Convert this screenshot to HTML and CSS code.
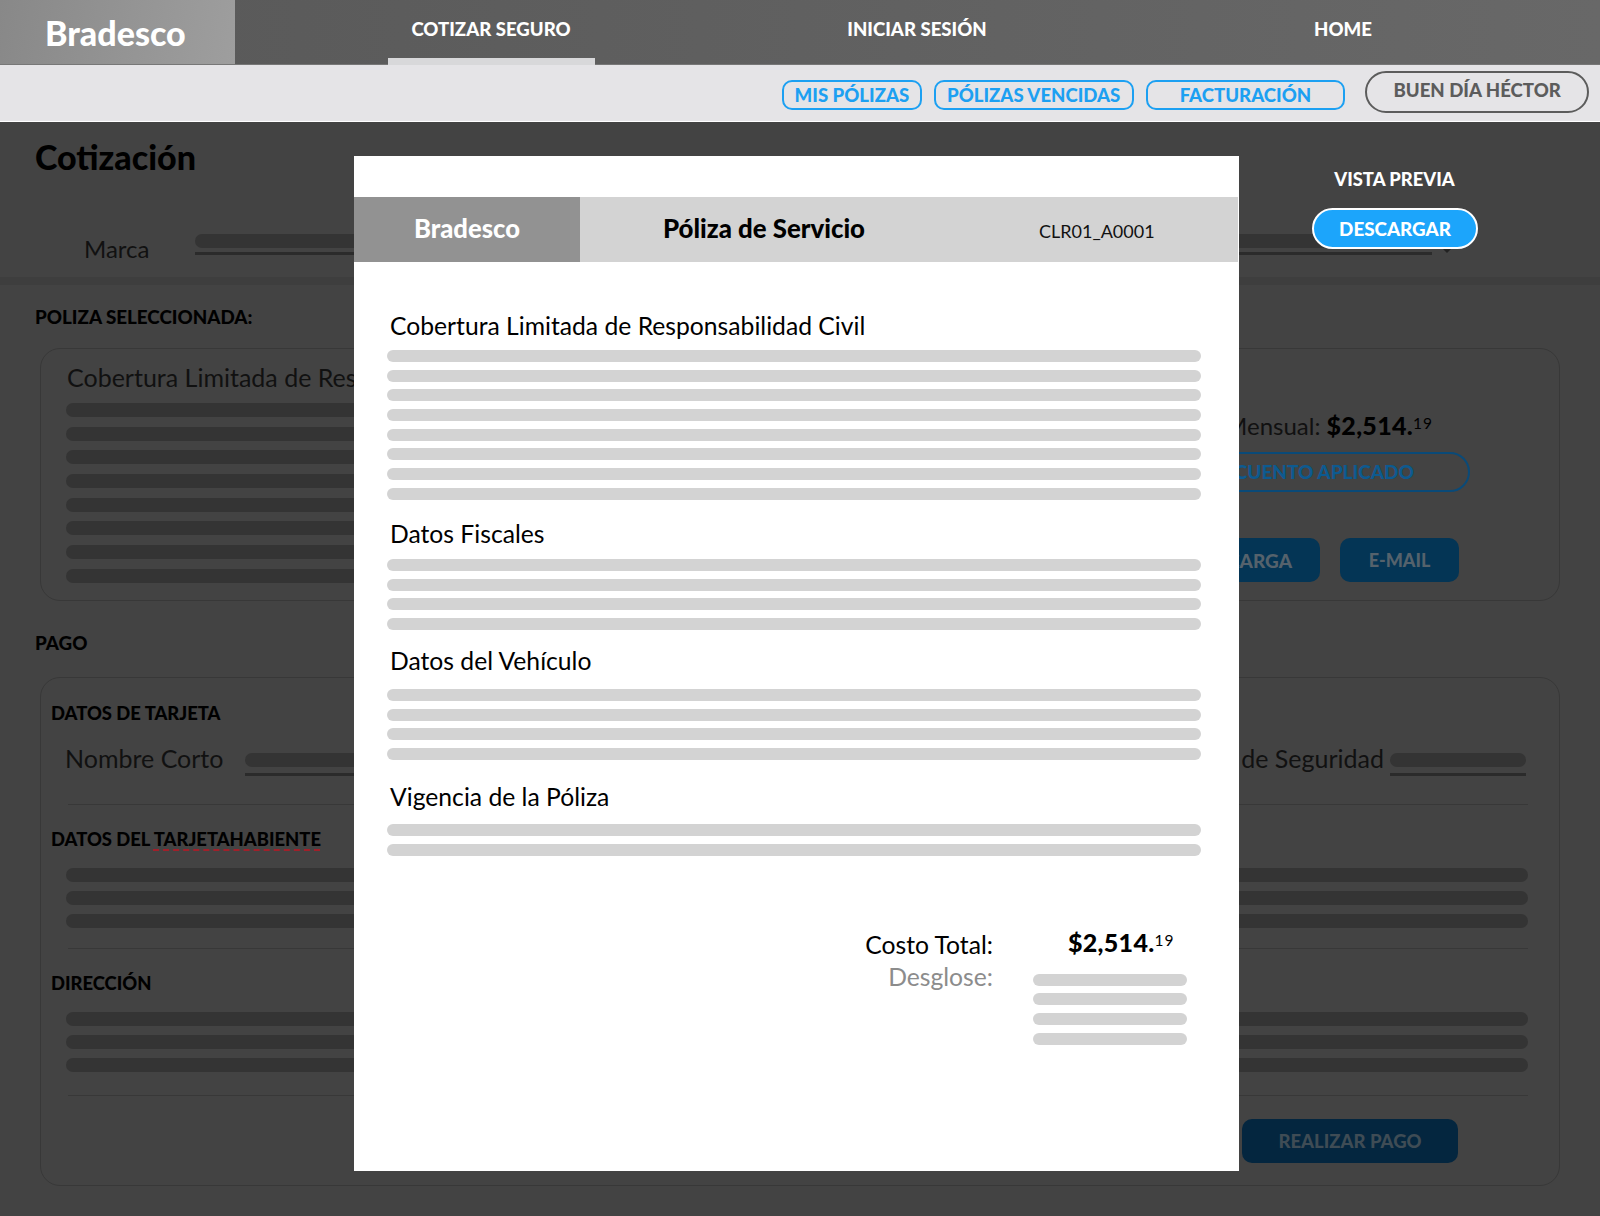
FILE: index.html
```html
<!DOCTYPE html>
<html lang="es">
<head>
<meta charset="utf-8">
<title>Bradesco - Cotización</title>
<link rel="stylesheet" href="styles.css">
</head>
<body>
<header class="topbar">
  <div class="logo">Bradesco</div>
  <nav class="nav">
    <a class="nav-item active">COTIZAR SEGURO</a>
    <a class="nav-item">INICIAR SESIÓN</a>
    <a class="nav-item">HOME</a>
  </nav>
</header>
<div class="subbar">
  <a class="pill pill-mis">MIS PÓLIZAS</a>
  <a class="pill pill-wide">PÓLIZAS VENCIDAS</a>
  <a class="pill pill-wide">FACTURACIÓN</a>
  <a class="greeting">BUEN DÍA HÉCTOR</a>
</div>
<main class="page">
  <section class="quote-head">
    <h1 class="page-title">Cotización</h1>
    <div class="brand-row">
      <span class="field-label">Marca</span>
      <div class="field field-brand"><div class="field-fill"></div></div>
      <span class="caret"></span>
    </div>
    <div class="preview">
      <div class="preview-title">VISTA PREVIA</div>
      <button class="download">DESCARGAR</button>
    </div>
  </section>
  <div class="band"></div>
  <h2 class="section-title first">POLIZA SELECCIONADA:</h2>
  <section class="panel panel-policy">
    <div class="policy-left">
      <div class="policy-name">Cobertura Limitada de Responsabilidad Civil</div>
      <div class="dark-lines tight">
        <i></i><i></i><i></i><i></i><i></i><i></i><i></i><i></i>
      </div>
    </div>
    <div class="policy-right">
      <div class="monthly">Pago Mensual: <b>$2,514.<sup>19</sup></b></div>
      <div class="discount">DESCUENTO APLICADO</div>
      <div class="actions">
        <button class="solid solid-descarga">DESCARGA</button>
        <button class="solid solid-mail">E-MAIL</button>
      </div>
    </div>
  </section>
  <h2 class="section-title second">PAGO</h2>
  <section class="panel panel-pay">
    <h3 class="sub-title">DATOS DE TARJETA</h3>
    <div class="card-row">
      <span class="field-label label-card">Nombre Corto</span>
      <div class="field field-name"><div class="field-fill"></div></div>
      <span class="field-label label-card label-sec">Código de Seguridad</span>
      <div class="field field-sec"><div class="field-fill"></div></div>
    </div>
    <hr class="divider">
    <h3 class="sub-title">DATOS DEL <span class="misspelled">TARJETAHABIENTE</span></h3>
    <div class="dark-lines"><i></i><i></i><i></i></div>
    <hr class="divider">
    <h3 class="sub-title">DIRECCIÓN</h3>
    <div class="dark-lines last"><i></i><i></i><i></i></div>
    <hr class="divider divider-last">
    <div class="pay-foot"><button class="solid solid-pay">REALIZAR PAGO</button></div>
  </section>
</main>

<aside class="modal">
  <div class="doc-head">
    <div class="doc-brand">Bradesco</div>
    <div class="doc-title">Póliza de Servicio</div>
    <div class="doc-code">CLR01_A0001</div>
  </div>
  <div class="doc-body">
    <h4 class="doc-h h-1">Cobertura Limitada de Responsabilidad Civil</h4>
    <div class="lines"><i></i><i></i><i></i><i></i><i></i><i></i><i></i><i></i></div>
    <h4 class="doc-h h-2">Datos Fiscales</h4>
    <div class="lines"><i></i><i></i><i></i><i></i></div>
    <h4 class="doc-h h-3">Datos del Vehículo</h4>
    <div class="lines"><i></i><i></i><i></i><i></i></div>
    <h4 class="doc-h h-4">Vigencia de la Póliza</h4>
    <div class="lines"><i></i><i></i></div>
    <div class="totals">
      <div class="totals-labels">
        <div class="total-label">Costo Total:</div>
        <div class="breakdown-label">Desglose:</div>
      </div>
      <div class="totals-values">
        <div class="total-value">$2,514.<sup>19</sup></div>
        <div class="lines small"><i></i><i></i><i></i><i></i></div>
      </div>
    </div>
  </div>
</aside>
</body>
</html>
```

FILE: styles.css
```css
* { box-sizing: border-box; }
html, body { margin: 0; padding: 0; }
body {
  width: 1600px;
  height: 1216px;
  overflow: hidden;
  position: relative;
  background: #434343;
  font-family: Lato, "Open Sans", sans-serif;
  color: #000;
}
h1, h2, h3, h4, p { margin: 0; }
button { font-family: inherit; border: 0; padding: 0; }

/* Top bar */
.topbar {
  display: flex;
  height: 65px;
  background: linear-gradient(90deg, #585858, #686868);
  border-bottom: 1px solid #777;
}
.logo {
  width: 235px;
  padding-left: 45px;
  background: linear-gradient(100deg, #888, #9e9e9e);
  color: #fff;
  font-size: 34px;
  font-weight: 900;
  line-height: 66px;
}
.nav {
  flex: 1;
  display: grid;
  grid-template-columns: repeat(3, 426px);
  padding-left: 43px;
}
.nav-item {
  position: relative;
  text-align: center;
  color: #fff;
  font-size: 18.6px;
  font-weight: 900;
  line-height: 58px;
}
.nav-item.active::after {
  content: "";
  position: absolute;
  left: 110px;
  bottom: -1px;
  width: 207px;
  height: 7px;
  background: #d8d8da;
}

/* Sub bar */
.subbar {
  display: flex;
  align-items: flex-start;
  height: 57px;
  padding: 15px 11px 0 782px;
  background: #e5e4e7;
  border-bottom: 1px solid #fff;
}
.pill {
  height: 30px;
  margin-right: 12px;
  border: 2px solid #1ca0f2;
  border-radius: 10px;
  color: #1ca0f2;
  font-size: 18.6px;
  font-weight: 900;
  line-height: 27px;
  text-align: center;
  white-space: nowrap;
}
.pill-mis { width: 140px; }
.pill-wide { width: 200px; }
.greeting {
  width: 224px;
  height: 42px;
  margin: -9px 0 0 8px;
  border: 2px solid #5c5c5c;
  border-radius: 21px;
  color: #5c5c5c;
  font-size: 18.6px;
  font-weight: 900;
  line-height: 35px;
  text-align: center;
}

/* Page behind the dialog */
.quote-head {
  position: relative;
  height: 155px;
  padding: 15px 0 0 35px;
}
.page-title {
  font-size: 34px;
  font-weight: 900;
  line-height: 40px;
}
.brand-row {
  display: flex;
  align-items: flex-start;
  margin-top: 57px;
  padding-left: 49px;
}
.field-label {
  font-size: 24px;
  line-height: 30px;
  color: #111;
  white-space: nowrap;
}
.label-card { font-size: 25px; }
.field {
  border-bottom: 3px solid #2b2b2b;
}
.field-fill {
  height: 14px;
  margin-bottom: 4px;
  border-radius: 7px;
  background: #343434;
}
.field-brand {
  width: 1237px;
  margin-left: 45px;
}
.caret {
  margin: 15px 0 0 11px;
  border: 4px solid transparent;
  border-top-color: #222;
}
.preview {
  position: absolute;
  left: 1312px;
  top: 46px;
  width: 165px;
  text-align: center;
}
.preview-title {
  color: #fff;
  font-size: 18.4px;
  font-weight: 900;
  line-height: 22px;
}
.download {
  display: block;
  width: 166px;
  height: 41px;
  margin-top: 18px;
  border: 2px solid #fff;
  border-radius: 21px;
  background: #1ca5fb;
  color: #fff;
  font-size: 18.8px;
  font-weight: 900;
  line-height: 34px;
}
.band {
  height: 8px;
  background: #3e3e3e;
}
.section-title {
  margin-left: 35px;
  font-size: 18.8px;
  font-weight: 900;
  line-height: 22px;
}
.section-title.first { padding-top: 21px; height: 63px; }
.section-title.second { padding-top: 31px; height: 76px; }
.panel {
  width: 1520px;
  margin-left: 40px;
  border: 1px solid #383838;
  border-radius: 20px;
}
.panel-policy {
  display: flex;
  justify-content: space-between;
  height: 253px;
}
.policy-left { width: 560px; padding: 13px 0 0 26px; }
.policy-name {
  font-size: 25px;
  line-height: 30px;
  color: #111;
  white-space: nowrap;
}
.dark-lines { display: flex; flex-direction: column; gap: 9px; }
.dark-lines i {
  display: block;
  height: 14px;
  border-radius: 7px;
  background: #343434;
}
.dark-lines.tight { gap: 9.7px; margin-top: 11px; margin-left: -1px; }
.policy-right {
  width: 400px;
  padding: 61px 0 0 0;
  margin-right: 89px;
  display: flex;
  flex-direction: column;
  align-items: flex-end;
}
.monthly {
  font-size: 24px;
  line-height: 30px;
  color: #111;
  margin-right: 37px;
  white-space: nowrap;
}
.monthly b { font-size: 25px; font-weight: 900; color: #000; letter-spacing: 0.3px; }
sup { font-size: 62%; line-height: 0; vertical-align: 0.38em; font-weight: 400; letter-spacing: 1px; }
.discount {
  width: 400px;
  height: 40px;
  margin-top: 11px;
  padding-right: 54px;
  border: 2px solid #0a4a78;
  border-radius: 20px;
  color: #0d5a90;
  font-size: 19px;
  font-weight: 900;
  line-height: 35px;
  text-align: right;
}
.actions { display: flex; gap: 20px; margin: 46px 11px 0 0; }
.solid {
  height: 44px;
  border-radius: 10px;
  background: #043555;
  color: #55626c;
  font-size: 18px;
  font-weight: 900;
}
.solid-descarga { width: 160px; text-align: right; padding-right: 28px; font-size: 19px; }
.solid-mail { width: 119px; }
.panel-pay {
  height: 509px;
  padding: 24px 31px 0 10px;
}
.sub-title {
  font-size: 18.4px;
  font-weight: 900;
  line-height: 22px;
}
.card-row {
  display: flex;
  align-items: flex-start;
  margin-top: 19px;
  padding-left: 14px;
}
.card-row .field-fill { margin-bottom: 6px; }
.field-name { width: 600px; margin-left: 22px; margin-top: 10px; }
.label-sec { margin-left: auto; }
.field-sec { width: 136px; margin: 10px 2px 0 6px; }
.divider {
  height: 0;
  margin: 0 0 0 17px;
  border: 0;
  border-top: 1px solid #383838;
}
.card-row + .divider { margin-top: 28px; margin-bottom: 23px; }
.misspelled {
  text-decoration: underline dashed #a0202a;
  text-decoration-thickness: 2px;
  text-underline-offset: 3px;
}
.sub-title + .dark-lines { margin: 18px 0 20px 15px; }
.dark-lines + .divider { margin-bottom: 23px; }
.dark-lines.last { margin-bottom: 23px; }
.pay-foot { display: flex; justify-content: flex-end; padding-right: 70px; }
.solid-pay {
  width: 216px;
  background: #04263f;
  color: #3f4c55;
  font-size: 18.5px;
}

/* Dialog */
.modal {
  position: absolute;
  left: 354px;
  top: 156px;
  width: 885px;
  height: 1015px;
  padding-top: 41px;
  background: #fff;
}
.doc-head {
  display: flex;
  height: 65px;
  margin-right: 1px;
  background: #d3d3d3;
  line-height: 63px;
}
.doc-brand {
  width: 226px;
  background: #929292;
  color: #fff;
  font-size: 25.6px;
  font-weight: 900;
  text-align: center;
}
.doc-title {
  width: 459px;
  padding-left: 83px;
  font-size: 25.8px;
  font-weight: 900;
  white-space: nowrap;
}
.doc-code {
  font-size: 18px;
  padding-top: 3px;
  color: #111;
}
.doc-body { padding: 0 38px 0 33px; }
.doc-h {
  margin-left: 3px;
  font-size: 24.7px;
  font-weight: 400;
  line-height: 30px;
  white-space: nowrap;
}
.h-1 { margin-top: 49px; margin-bottom: 9px; }
.h-2 { margin-top: 19px; margin-bottom: 10px; }
.h-3 { margin-top: 16px; margin-bottom: 13px; }
.h-4 { margin-top: 22px; margin-bottom: 12px; }
.lines { display: flex; flex-direction: column; gap: 7.7px; }
.lines i {
  display: block;
  height: 12px;
  border-radius: 6px;
  background: #d3d3d3;
}
.totals {
  display: flex;
  margin-top: 74px;
  padding-left: 434px;
}
.totals-labels { width: 172px; text-align: right; }
.total-label { font-size: 24.7px; line-height: 30px; }
.breakdown-label { font-size: 24.7px; line-height: 30px; margin-top: 2px; color: #8c8c8c; }
.totals-values { width: 154px; margin-left: 40px; }
.total-value {
  margin: -3px 0 0 35px;
  font-size: 25px;
  font-weight: 900;
  line-height: 30px;
  letter-spacing: 0.3px;
  white-space: nowrap;
}
.lines.small { margin-top: 17px; }
```
